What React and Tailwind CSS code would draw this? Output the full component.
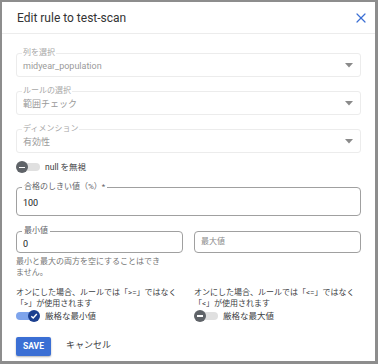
import { X } from 'lucide-react';

function Caret() {
  return (
    <svg width="8" height="5" viewBox="0 0 8 5" className="shrink-0">
      <path d="M0 0h8L4 4.5z" fill="#8a8a8a" />
    </svg>
  );
}

function SelectField({ label, value }) {
  return (
    <div className="relative h-[24px] rounded-[3px] border border-[#ececec] flex items-center pl-[6px] pr-[7px]">
      <span className="absolute -top-[6px] left-[5px] bg-white px-[1px] text-[8px] leading-[10px] text-[#a8a8a8]">{label}</span>
      <span className="flex-1 pt-[4px] text-[9px] text-[#9a9a9a]">{value}</span>
      <Caret />
    </div>
  );
}

function TextField({ label, value, placeholder, className }) {
  return (
    <div className={'relative rounded-[4px] border border-[#a0a0a0] flex items-center px-[6px] ' + className}>
      {label && (
        <span className="absolute -top-[6px] left-[5px] bg-white px-[2px] text-[8px] leading-[10px] text-[#5f6368]">{label}</span>
      )}
      {value ? (
        <span className="pt-[5px] text-[9px] text-[#202124]">{value}</span>
      ) : (
        <span className="text-[8px] text-[#8a8a8a]">{placeholder}</span>
      )}
    </div>
  );
}

function ToggleOff({ label }) {
  return (
    <div className="flex items-center gap-[5px]">
      <div className="relative w-[24px] h-[12px] flex items-center">
        <div className="absolute left-[4px] right-0 h-[8px] rounded-full bg-[#e0e0e0]" />
        <div className="relative w-[12px] h-[12px] rounded-full bg-[#5f6368] flex items-center justify-center">
          <div className="w-[6px] h-[1.5px] bg-white" />
        </div>
      </div>
      <span className="text-[8.5px] text-[#3c4043]">{label}</span>
    </div>
  );
}

function ToggleOn({ label }) {
  return (
    <div className="flex items-center gap-[5px]">
      <div className="relative w-[24px] h-[12px] flex items-center justify-end">
        <div className="absolute left-0 right-[4px] h-[8px] rounded-full bg-[#7ea4ec]" />
        <div className="relative w-[12px] h-[12px] rounded-full bg-[#1b3f8f] flex items-center justify-center">
          <svg width="8" height="8" viewBox="0 0 8 8">
            <path d="M1.3 4.2 3.2 6 6.8 2" fill="none" stroke="white" strokeWidth="1.4" />
          </svg>
        </div>
      </div>
      <span className="text-[8.5px] text-[#3c4043]">{label}</span>
    </div>
  );
}

export default function App() {
  return (
    <div className="w-[378px] h-[364px] bg-white border-l-2 border-t-2 border-r-[3px] border-b-[3px] border-[#8d8d8d] font-['Roboto','Noto_Sans_CJK_JP',sans-serif] overflow-hidden">
      <div className="h-[32px] flex items-center justify-between pl-[15px] pr-[6px] border-b border-[#ececec]">
        <h1 className="text-[12px] text-[#333333]">Edit rule to test-scan</h1>
        <X size={16} strokeWidth={1.8} className="text-[#3b6fd4]" />
      </div>

      <div className="px-[14px]">
        <div className="mt-[19px] flex flex-col gap-[14px]">
          <SelectField label="列を選択" value="midyear_population" />
          <SelectField label="ルールの選択" value="範囲チェック" />
          <SelectField label="ディメンション" value="有効性" />
        </div>

        <div className="mt-[8px]">
          <ToggleOff label="null を無視" />
        </div>

        <TextField label="合格のしきい値（%）*" value="100" className="mt-[13px] h-[29px]" />

        <div className="mt-[15px] flex gap-[11px]">
          <TextField label="最小値" value="0" className="flex-1 h-[22px]" />
          <TextField placeholder="最大値" className="flex-1 h-[22px]" />
        </div>
        <p className="mt-[3px] w-[150px] text-[8px] leading-[11px] text-[#757575]">
          最小と最大の両方を空にすることはできません。
        </p>

        <div className="mt-[9px] grid grid-cols-2 gap-[11px]">
          <div>
            <p className="text-[8px] leading-[11px] text-[#3c4043]">オンにした場合、ルールでは「&gt;=」ではなく「&gt;」が使用されます</p>
            <div className="mt-[1px]"><ToggleOn label="厳格な最小値" /></div>
          </div>
          <div>
            <p className="text-[8px] leading-[11px] text-[#3c4043]">オンにした場合、ルールでは「&lt;=」ではなく「&lt;」が使用されます</p>
            <div className="mt-[1px]"><ToggleOff label="厳格な最大値" /></div>
          </div>
        </div>

        <div className="mt-[14px] flex items-center gap-[15px]">
          <button className="h-[19px] px-[7px] rounded-[2px] bg-[#3b6fd4] text-white text-[8.5px] font-bold shadow-[0_1px_2px_rgba(0,0,0,0.3)]">SAVE</button>
          <span className="text-[9px] text-[#3c4043]">キャンセル</span>
        </div>
      </div>
    </div>
  );
}
